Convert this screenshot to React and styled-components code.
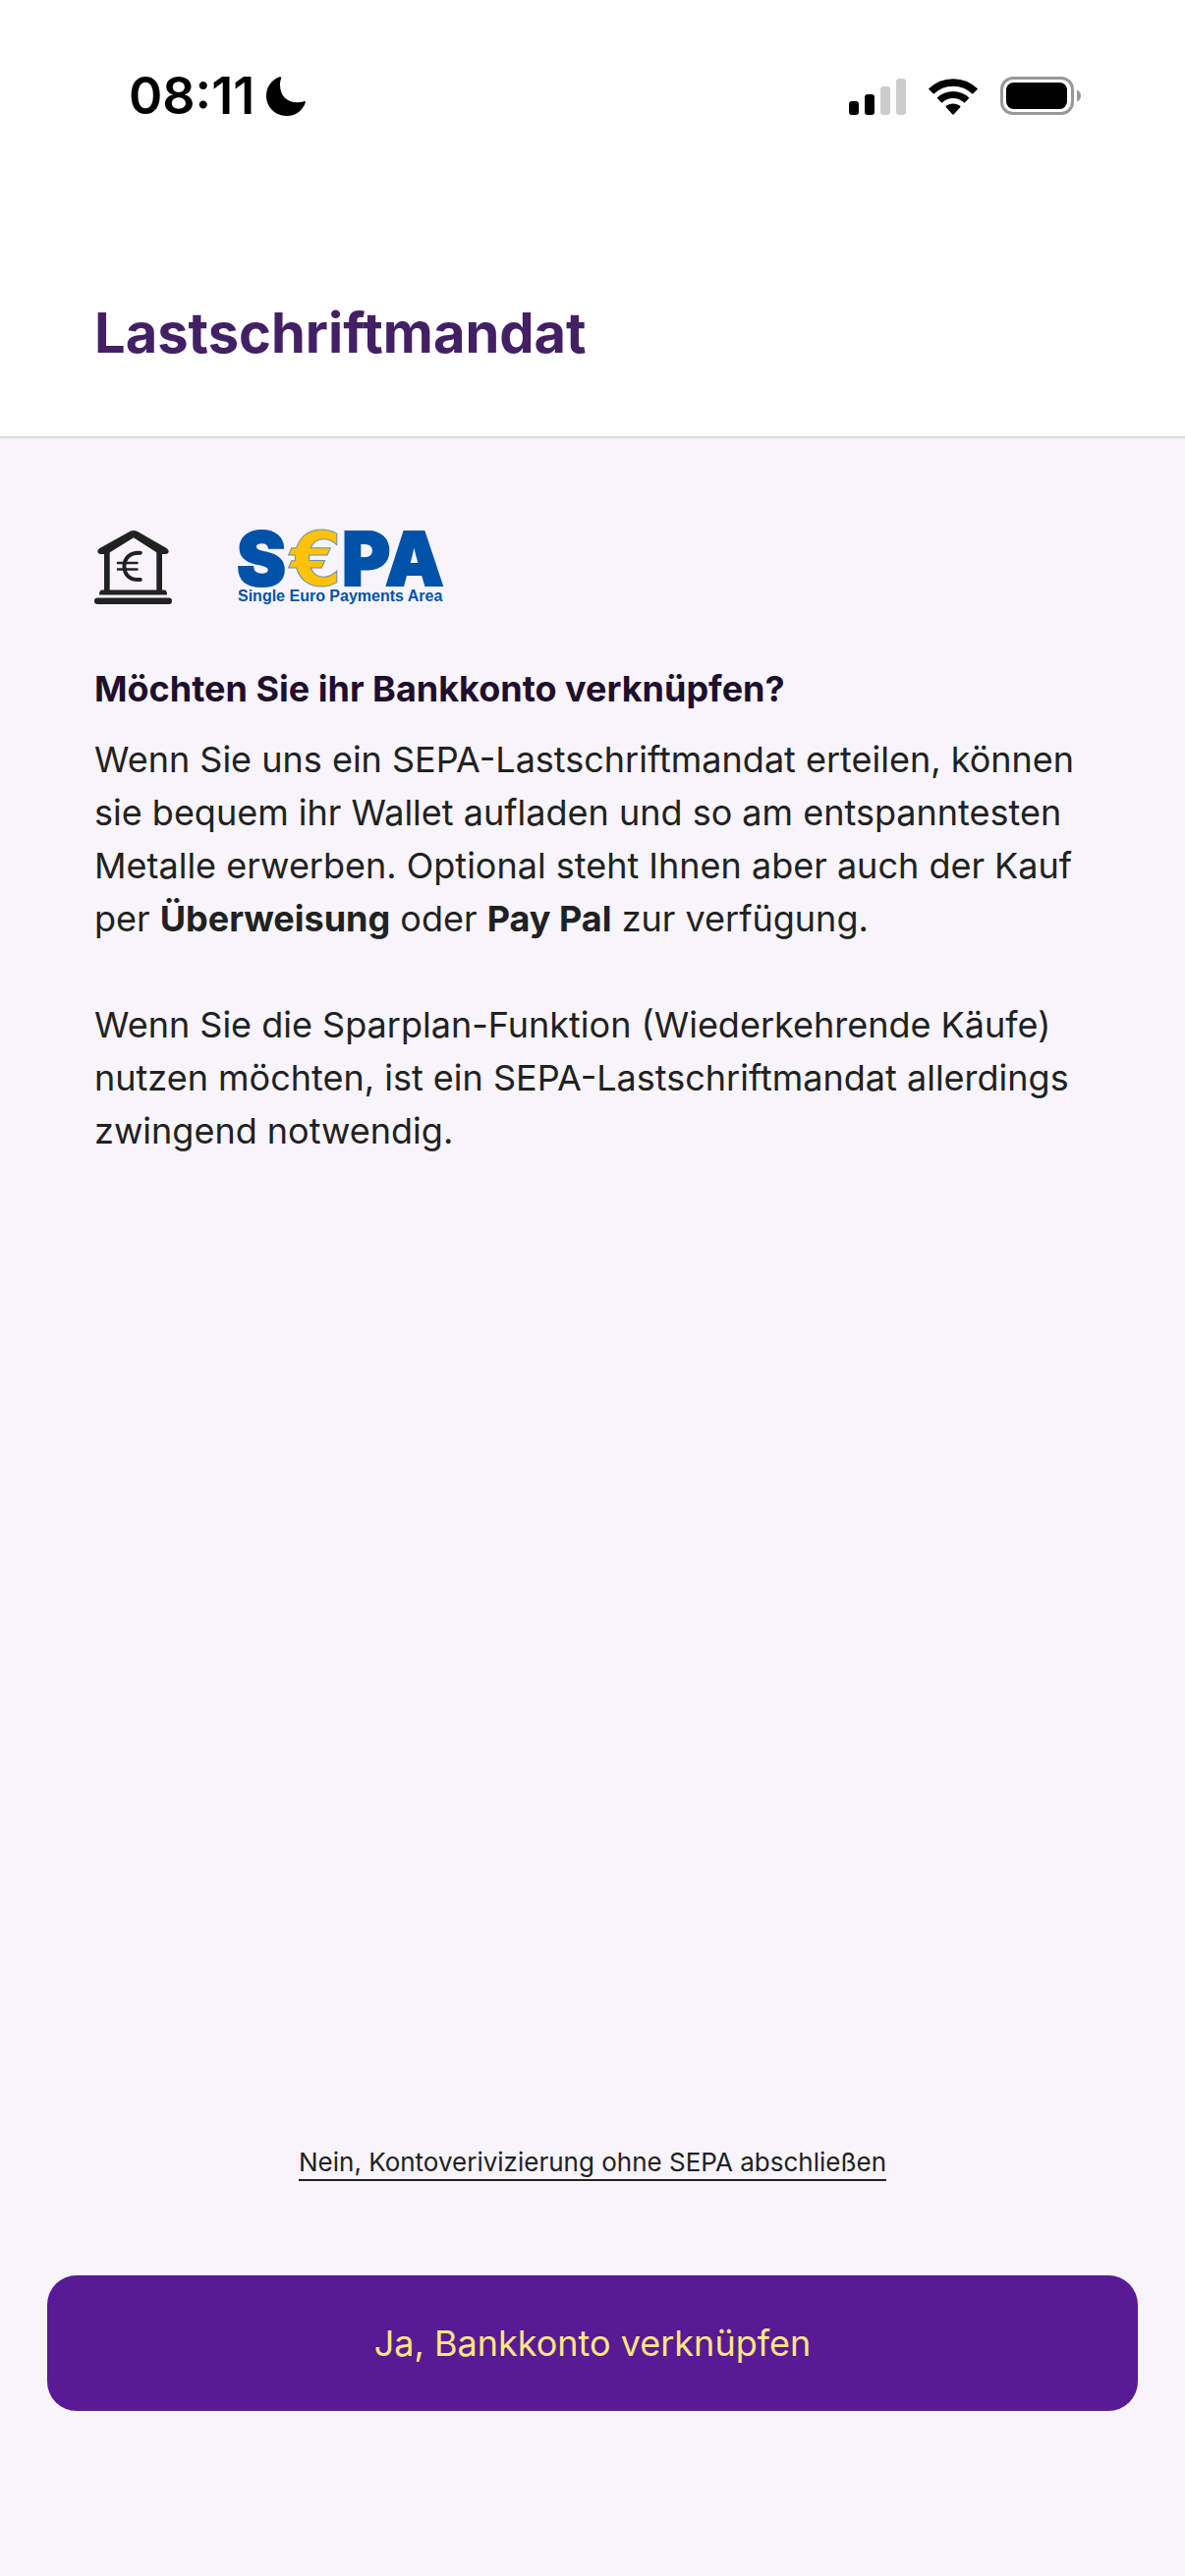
import styled, { createGlobalStyle } from "styled-components";

const GlobalStyle = createGlobalStyle`
  * {
    box-sizing: border-box;
  }
  body {
    margin: 0;
    background: #f7f4fb;
    color: #212121;
    font-family: Inter, "Liberation Sans", sans-serif;
  }
`;
const Screen = styled.div`
  min-height: 100vh;
  display: flex;
  flex-direction: column;
`;
const Header = styled.header`
  background: #fff;
  border-bottom: 2px solid #dcdae0;
  box-shadow: 0 1px 2px #e8e6ee;
`;
const StatusBar = styled.div`
  display: flex;
  justify-content: space-between;
  align-items: center;
  height: 196px;
  padding: 0 106px 0 131px;
`;
const StatusGroup = styled.div`
  display: flex;
  align-items: center;
  gap: ${(props) => props.$gap}px;
`;
const Time = styled.span`
  color: #000;
  font-size: 52px;
  font-weight: 600;
  line-height: 60px;
`;
const Title = styled.h1`
  margin: 0;
  padding: 108px 96px 70px;
  color: #432063;
  font-size: 56px;
  font-weight: 700;
  line-height: 70px;
`;
const Content = styled.main`
  flex: 1;
  padding: 94px 96px 0;
`;
const Logos = styled.div`
  display: flex;
  align-items: flex-start;
  gap: 66px;
  margin-bottom: 56px;
`;
const SepaSvg = styled.svg`
  overflow: visible;
`;
const Question = styled.h2`
  margin: 0 0 18px;
  color: #1f0f2d;
  font-size: 36px;
  font-weight: 700;
  line-height: 54px;
`;
const Text = styled.p`
  margin: 0 0 54px;
  font-size: 36px;
  line-height: 54px;
`;
const Actions = styled.footer`
  display: flex;
  flex-direction: column;
  align-items: center;
  gap: 96px;
  padding: 0 48px 168px;
`;
const SkipLink = styled.a`
  color: #212121;
  border-bottom: 2px solid #212121;
  font-size: 26px;
  line-height: 34px;
  text-decoration: none;
`;
const PrimaryButton = styled.button`
  width: 100%;
  padding: 42px 24px;
  border: 0;
  border-radius: 30px;
  background: #591a96;
  color: #ffe680;
  font-family: inherit;
  font-size: 36px;
  line-height: 54px;
  cursor: pointer;
`;

function MoonIcon() {
  return (
    <svg width="40" height="40" viewBox="0 0 40 40" aria-hidden="true">
      <path d="M13.500 0.300C14.900 -0.200 15.600 0.600 15.100 1.800C14.300 3.800 14 6 14 8.400C14 19.200 21 26.200 31.600 26.200C34 26.200 36.200 25.800 38.200 25.200C39.500 24.800 40.200 25.300 39.800 26.400C36.900 34.600 29.600 40 20.600 40C9 40 0 31 0 19.600C0 10.600 5.300 3.400 13.500 0.300Z" />
    </svg>
  );
}

function SignalIcon() {
  return (
    <svg width="58" height="38" viewBox="0 0 58 38" aria-hidden="true">
      <rect x="0" y="24" width="10" height="14" rx="3" />
      <rect x="16" y="17" width="10" height="21" rx="3" />
      <rect x="32" y="9" width="10" height="29" rx="3" fill="#ccc" />
      <rect x="48" y="1" width="10" height="37" rx="3" fill="#ccc" />
    </svg>
  );
}

function WifiIcon() {
  return (
    <svg width="52" height="38" viewBox="0 0 52 38" aria-hidden="true">
      <g fill="none" stroke="#000">
        <path d="M3.500 14.200A32 32 0 0 1 48.500 14.200" strokeWidth="7.500" />
        <path d="M12 23.200A20 20 0 0 1 40 23.200" strokeWidth="7" />
      </g>
      <path d="M19 30.500Q17.800 29.300 19.200 28.500Q26 24.500 32.800 28.500Q34.200 29.300 33 30.500L26.800 37.200Q26 38 25.200 37.200Z" />
    </svg>
  );
}

function BatteryIcon() {
  return (
    <svg width="82" height="40" viewBox="0 0 82 40" aria-hidden="true">
      <rect x="1.500" y="1.500" width="72" height="36" rx="11.500" fill="none" stroke="#999" strokeWidth="3" />
      <rect x="6" y="6" width="62" height="27" rx="7.500" />
      <path d="M78 13.500C80.500 14.500 82 16.600 82 19.500C82 22.400 80.500 24.500 78 25.500Z" fill="#999" />
    </svg>
  );
}

function BankIcon() {
  return (
    <svg width="80" height="76" viewBox="0 0 80 76" aria-hidden="true">
      <g fill="#212121">
        <path d="M36 1Q40 -1 44 1L73.500 18Q76.500 20 75.300 22.500Q74.500 24 72 24H66L40 7.300L13 24H7Q4.500 24 3.700 22.500Q2.500 20 5.500 18Z" />
        <path d="M10 20H15.700V61H10ZM63.300 20H69V61H63.300Z" />
        <path d="M8 60.500H71Q74 60.500 74 65.500H5Q5 60.500 8 60.500Z" />
        <rect x="0" y="68.500" width="79" height="6.500" rx="3.250" />
      </g>
      <g fill="none" stroke="#212121" strokeLinecap="round">
        <path d="M46.800 22.700C36 22 30.500 28 30.500 36.500C30.500 45 36 50.700 46.800 50" strokeWidth="4" />
        <path d="M24 33H43.500M24 39.500H43.500" strokeWidth="2.500" />
      </g>
    </svg>
  );
}

function SepaLogo() {
  return (
    <SepaSvg width="210" height="78" viewBox="0 0 210 78" role="img" aria-label="SEPA" fontFamily="Inter, sans-serif" fontWeight="900">
      <g fontSize="75" fill="#0052a8" stroke="#0052a8" strokeWidth="2">
        <text x="-1" y="56">S</text>
        <text x="106" y="56">P</text>
        <text x="150" y="56">A</text>
      </g>
      <text x="53" y="56" fontSize="76" fontWeight="700" fontFamily="DejaVu Sans, sans-serif" fill="#ffc20a" stroke="#6f93a0" strokeWidth="1">€</text>
      <text x="0" y="72" fontSize="16" fontWeight="700" fontFamily="Liberation Sans, Arial, sans-serif" fill="#0052a8">
        Single Euro Payments Area
      </text>
    </SepaSvg>
  );
}

export default function App() {
  return (
    <Screen>
      <GlobalStyle />
      <Header>
        <StatusBar>
          <StatusGroup $gap={12}>
            <Time>08:11</Time>
            <MoonIcon />
          </StatusGroup>
          <StatusGroup $gap={22}>
            <SignalIcon />
            <WifiIcon />
            <BatteryIcon />
          </StatusGroup>
        </StatusBar>
        <Title>Lastschriftmandat</Title>
      </Header>
      <Content>
        <Logos>
          <BankIcon />
          <SepaLogo />
        </Logos>
        <Question>Möchten Sie ihr Bankkonto verknüpfen?</Question>
        <Text>
          Wenn Sie uns ein SEPA-Lastschriftmandat erteilen, können sie bequem
          ihr Wallet aufladen und so am entspanntesten Metalle erwerben.
          Optional steht Ihnen aber auch der Kauf per <b>Überweisung</b> oder{" "}
          <b>Pay Pal</b> zur verfügung.
        </Text>
        <Text>
          Wenn Sie die Sparplan-Funktion (Wiederkehrende Käufe) nutzen möchten,
          ist ein SEPA-Lastschriftmandat allerdings zwingend notwendig.
        </Text>
      </Content>
      <Actions>
        <SkipLink href="#abschliessen">
          Nein, Kontoverivizierung ohne SEPA abschließen
        </SkipLink>
        <PrimaryButton type="button">Ja, Bankkonto verknüpfen</PrimaryButton>
      </Actions>
    </Screen>
  );
}
